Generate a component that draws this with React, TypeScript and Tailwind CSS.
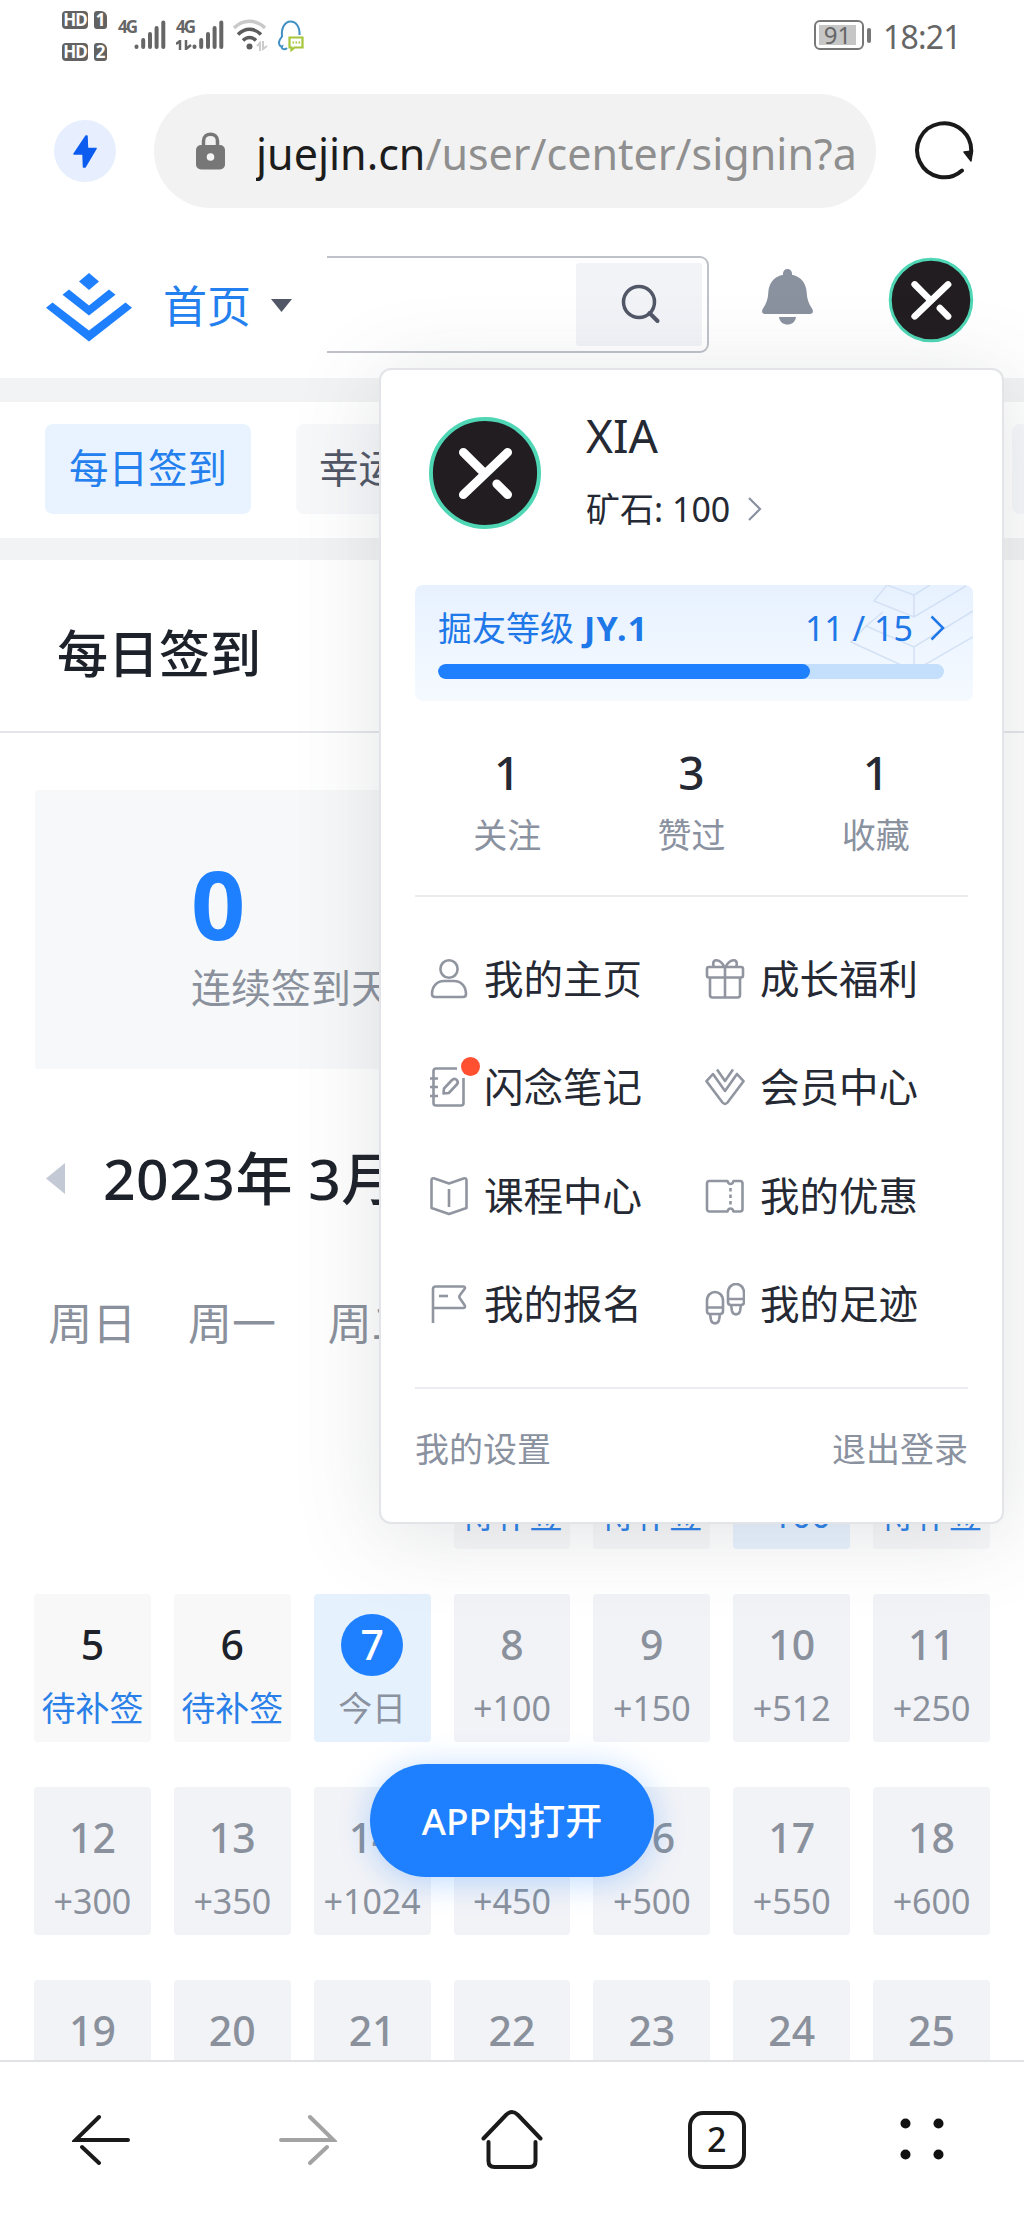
import type { ReactNode } from 'react';

type DayState = 'pending' | 'today' | 'signed' | 'future';

interface Day {
  day: number;
  label: string;
  state: DayState;
}

const WEEKDAYS = ['周日', '周一', '周二', '周三', '周四', '周五', '周六'];

const DAYS: Day[] = [
  { day: 1, label: '待补签', state: 'pending' },
  { day: 2, label: '待补签', state: 'pending' },
  { day: 3, label: '+100', state: 'signed' },
  { day: 4, label: '待补签', state: 'pending' },
  { day: 5, label: '待补签', state: 'pending' },
  { day: 6, label: '待补签', state: 'pending' },
  { day: 7, label: '今日', state: 'today' },
  { day: 8, label: '+100', state: 'future' },
  { day: 9, label: '+150', state: 'future' },
  { day: 10, label: '+512', state: 'future' },
  { day: 11, label: '+250', state: 'future' },
  { day: 12, label: '+300', state: 'future' },
  { day: 13, label: '+350', state: 'future' },
  { day: 14, label: '+1024', state: 'future' },
  { day: 15, label: '+450', state: 'future' },
  { day: 16, label: '+500', state: 'future' },
  { day: 17, label: '+550', state: 'future' },
  { day: 18, label: '+600', state: 'future' },
  { day: 19, label: '', state: 'future' },
  { day: 20, label: '', state: 'future' },
  { day: 21, label: '', state: 'future' },
  { day: 22, label: '', state: 'future' },
  { day: 23, label: '', state: 'future' },
  { day: 24, label: '', state: 'future' },
  { day: 25, label: '', state: 'future' },
];

const CELL_STYLES: Record<DayState, { box: string; num: string; label: string }> = {
  pending: { box: 'bg-[#f8f8f9]', num: 'text-[#1d2129]', label: 'text-[#2a80e8]' },
  signed: { box: 'bg-[#e8f3ff]', num: 'text-[#1e80ff]', label: 'text-[#2a80e8]' },
  today: { box: 'bg-[#e6f1fe]', num: 'rounded-full bg-[#1e80ff] text-white', label: 'text-[#8a919f]' },
  future: { box: 'bg-[#f2f3f7]', num: 'text-[#8a919c]', label: 'text-[#8a919c]' },
};

const STATS = [
  { value: 1, label: '关注' },
  { value: 3, label: '赞过' },
  { value: 1, label: '收藏' },
];

function MenuSvg({ children }: { children: ReactNode }) {
  return (
    <svg
      width="40"
      height="42"
      viewBox="0 0 40 42"
      fill="none"
      stroke="#9095a0"
      strokeWidth="2.6"
      strokeLinejoin="round"
      className="shrink-0"
    >
      {children}
    </svg>
  );
}

const MENU: { label: string; dot?: boolean; icon: ReactNode }[] = [
  {
    label: '我的主页',
    icon: (
      <MenuSvg>
        <ellipse cx="20" cy="11" rx="8.6" ry="8.8" />
        <path d="M3 36c0-7.500 5-13 12-13h10c7 0 12 5.500 12 13 0 2-1 3-3 3H6c-2 0-3-1-3-3z" />
      </MenuSvg>
    ),
  },
  {
    label: '成长福利',
    icon: (
      <MenuSvg>
        <rect x="2" y="9" width="36" height="10.500" rx="2" />
        <path d="M5 19.500V37c0 1.500 1 2.500 2.500 2.500h25c1.500 0 2.500-1 2.500-2.500V19.500M20 9v30.500M19.500 9C17 4 14 2 11 2.200 8 2.600 7.500 6 9 9M20.500 9C23 4 26 2 29 2.200c3 .4 3.500 3.800 2 6.800" />
      </MenuSvg>
    ),
  },
  {
    label: '闪念笔记',
    dot: true,
    icon: (
      <MenuSvg>
        <path d="M28 2.500H7C5.500 2.500 4.500 3.500 4.500 5v32c0 1.500 1 2.500 2.500 2.500h25c1.500 0 2.500-1 2.500-2.500V12M1 12.500h8M1 21h8M1 30h8" />
        <path d="M14.500 27.500l.5-5 8-8.500c1.500-1.500 3.500-1.500 4.800 0 1.200 1.400 1.200 3.200 0 4.500l-8 8.500z" />
      </MenuSvg>
    ),
  },
  {
    label: '会员中心',
    icon: (
      <MenuSvg>
        <path d="M8 8L1.500 15.200 17.500 36.500c1.500 1.800 3.500 1.800 5 0L38.500 15.200 32 8 20 25z" />
        <path d="M12 3.500l8 11.500 8-11.500" />
      </MenuSvg>
    ),
  },
  {
    label: '课程中心',
    icon: (
      <MenuSvg>
        <path d="M2.500 33V5.500C2.500 3.500 4 2.800 5.500 3.500L20 8.500l14.500-5c1.500-.7 3 0 3 2V33L20 39z" />
        <path d="M20 14v18" />
      </MenuSvg>
    ),
  },
  {
    label: '我的优惠',
    icon: (
      <MenuSvg>
        <path d="M4.500 6h18c1 4 5 4 6 0H35c1.500 0 2.500 1 2.500 2.500V34c0 1.500-1 2.500-2.500 2.500h-6.500c-1-4-5-4-6 0h-18C3 36.500 2 35.500 2 34V8.500C2 7 3 6 4.500 6z" />
        <path d="M25.500 13v18" strokeDasharray="3.500 3" />
      </MenuSvg>
    ),
  },
  {
    label: '我的报名',
    icon: (
      <MenuSvg>
        <path d="M4 40V6c0-1.500 1-2.500 2.500-2.500h28c1.500 0 2 1.500 1 2.500l-4.500 6c-1 1.200-1 2.200 0 3.500l4.500 6.500c1 1.500.5 3-1 3H4" />
        <path d="M10 13h9" />
      </MenuSvg>
    ),
  },
  {
    label: '我的足迹',
    icon: (
      <MenuSvg>
        <path d="M2 28V18c0-12 16-12 16 0v10c0 2-1 3-3 3H5c-2 0-3-1-3-3zM2 24.500h16M5 31l1 6c1 4.500 7 4.500 8 0l1-6" />
        <path d="M23 19V10c0-12 16-12 16 0v9c0 2-1 3-3 3H26c-2 0-3-1-3-3zM23 16h16M26 22l1 6c1 4.500 7 4.500 8 0l1-6" />
      </MenuSvg>
    ),
  },
];

function Avatar({ size }: { size: number }) {
  return (
    <svg width={size} height={size} viewBox="0 0 116 116" className="shrink-0">
      <circle cx="58" cy="58" r="55" fill="#221d20" stroke="#4fd6b4" strokeWidth="4" />
      <path d="M36 37l22 22M81 37L36 80M70 69l11 11" stroke="#fff" strokeWidth="9" strokeLinecap="round" fill="none" />
    </svg>
  );
}

function Signal() {
  return (
    <svg width="32" height="30" viewBox="0 0 32 30" stroke="#666" strokeWidth="4" strokeLinecap="round">
      <path d="M2.500 26.500v.5M9.200 20v7M16 14v13M22.600 8v19M29.300 2.500V27" />
    </svg>
  );
}

function HdBadge({ n }: { n: number }) {
  return (
    <div className="flex gap-[6px] text-[17px] leading-[18px] font-bold text-white">
      <span className="h-[18px] w-[26px] rounded-[4px] bg-[#626262] text-center tracking-[-1px]">HD</span>
      <span className="h-[18px] w-[13px] rounded-[3px] rounded-tr-[6px] bg-[#626262] text-center">{n}</span>
    </div>
  );
}

function StatusBar() {
  return (
    <div className="flex h-[94px] shrink-0 pl-[62px] text-[#666]">
      <div className="flex flex-col gap-[14px] pt-[11px]">
        <HdBadge n={1} />
        <HdBadge n={2} />
      </div>
      <span className="mt-[18px] ml-[11px] w-[16px] text-[17px] leading-[18px] font-bold tracking-[-2px]">4G</span>
      <div className="mt-[20px]">
        <Signal />
      </div>
      <div className="mt-[18px] ml-[10px] w-[17px]">
        <div className="text-[17px] leading-[18px] font-bold tracking-[-2px]">4G</div>
        <svg width="16" height="10" viewBox="0 0 16 10" stroke="#666" strokeWidth="2.500" fill="none" className="mt-[4px]">
          <path d="M0 4l4-3v9M10 0v9l5-4" />
        </svg>
      </div>
      <div className="mt-[20px] -ml-[1px]">
        <Signal />
      </div>
      <svg width="36" height="32" viewBox="0 0 36 32" fill="none" strokeWidth="3.500" className="mt-[19px] ml-[9px]">
        <path d="M1 9C10 0 23 0 32 9" stroke="#c9c9c9" />
        <path d="M5 15.500c7-7 16-7 23 0" stroke="#5c5c5c" />
        <path d="M10 21.500c4-4 9-4 13 0" stroke="#5c5c5c" />
        <circle cx="16.500" cy="27.500" r="3" fill="#5c5c5c" />
        <path d="M24 27l3-3v8M30 22v8l4-3" stroke="#ccc" strokeWidth="2" />
      </svg>
      <svg width="28" height="32" viewBox="0 0 28 32" fill="none" className="mt-[20px] ml-[8px]">
        <path
          d="M10 28c-2 2-6 1.500-5-1.500-1 .5-3-1-3-4 0-2 1.500-4 3-6C4 8 8 1.500 13.500 1.500S23 7 22.500 15"
          stroke="#3f8fc4"
          strokeWidth="2"
        />
        <path d="M12.500 17.500h13v10h-8l-3 2.500v-2.500h-2z" stroke="#a5c63a" strokeWidth="2.200" />
        <path d="M15.500 22.500h8" stroke="#a5c63a" strokeWidth="1.800" strokeDasharray="1.600 1.400" />
      </svg>
      <div className="mt-[20px] ml-auto flex h-[30px] w-[50px] rounded-[6px] border-[2.500px] border-[#777] p-[3px]">
        <span className="w-[37px] bg-[#c6c6c6] text-center text-[24px] leading-[19px]">91</span>
      </div>
      <span className="mt-[28px] ml-[3px] h-[15px] w-[4px] rounded-sm bg-[#777]" />
      <span className="mt-[17px] mr-[64px] ml-[12px] w-[77px] text-[32px] leading-[40px] tracking-[-0.800px]">18:21</span>
    </div>
  );
}

function AddressBar() {
  return (
    <div className="flex h-[114px] shrink-0 items-center pl-[54px]">
      <div className="flex h-[62px] w-[62px] items-center justify-center rounded-full bg-[#e7effe]">
        <svg width="24" height="33" viewBox="0 0 24 33" fill="#0d5cf0" stroke="#0d5cf0" strokeWidth="1.500" strokeLinejoin="round">
          <path d="M13 1L1 19h9l.5 13h1.500L23 13.500h-8.500L14 1z" />
        </svg>
      </div>
      <div className="ml-[38px] flex h-[114px] w-[722px] items-center rounded-full bg-[#f2f2f2] pl-[42px]">
        <svg width="29" height="38" viewBox="0 0 29 38" className="shrink-0">
          <path d="M7.500 15V9c0-9 14-9 14 0v6" fill="none" stroke="#777" strokeWidth="3.500" />
          <rect y="13" width="29" height="24.500" rx="5" fill="#777" />
          <circle cx="14.500" cy="25" r="3.800" fill="#f5f5f5" />
        </svg>
        <div className="mt-[5px] ml-[31px] w-[600px] overflow-hidden text-[43px] leading-[60px] whitespace-nowrap text-[#8f8f8f]">
          <span className="text-[#1c1c1c]">juejin.cn</span>/user/center/signin?a
        </div>
      </div>
      <svg width="62" height="62" viewBox="0 0 62 62" fill="none" className="ml-[37px]">
        <path d="M49 50.500A27 27 0 1 1 58 33" stroke="#1a1a1a" strokeWidth="4" strokeLinecap="round" />
        <path d="M51 32l7 9 1.500-10z" fill="#1a1a1a" stroke="#1a1a1a" strokeWidth="1.500" strokeLinejoin="round" />
      </svg>
    </div>
  );
}

function SiteHeader() {
  return (
    <header className="flex h-[170px] shrink-0 items-center pt-[22px] pl-[46px]">
      <svg width="86" height="69" viewBox="0 0 86 69" fill="#1e80ff" className="mt-[6px]">
        <path d="M43 0l10 8.500L43 17 33 8.500zM23 16.500l20 16 20-16 6.500 5.200L43 42.500 16.500 21.700zM6.500 29.500L43 57.500l36.500-28 6.500 5.200L43 68.500 0 34.700z" />
      </svg>
      <span className="mt-[4px] ml-[31px] text-[44px] leading-[60px] text-[#2480ee]">首页</span>
      <svg width="21" height="13" viewBox="0 0 21 13" className="mt-[2px] ml-[20px]">
        <path d="M0 0h21L10.500 13z" fill="#515767" />
      </svg>
      <div className="ml-[35px] flex h-[97px] w-[382px] justify-end rounded-r-[9px] border-[2.500px] border-l-0 border-[#bfc2c8] bg-white/50 p-[5px]">
        <div className="flex w-[126px] items-center justify-center rounded-[3px] bg-[#f2f3f7] pl-[4px]">
          <svg width="40" height="40" viewBox="0 0 40 40" fill="none" stroke="#515767" strokeWidth="3.500" className="-mt-[1px]">
            <circle cx="18" cy="18" r="15.500" />
            <path d="M28.500 29l8 8" strokeWidth="4" strokeLinecap="round" />
          </svg>
        </div>
      </div>
      <svg width="51" height="56" viewBox="0 0 51 56" fill="#8a919f" className="-mt-[14px] ml-[53px]">
        <path d="M25.500 0c-2.500 0-4.500 2-4.500 4.500v1.300C11 8 6.800 15 6.300 23.500 6 30 4.500 34.500 1 39.500c-2 3-.5 5.500 2 5.500h45c2.500 0 4-2.500 2-5.500-3.500-5-5-9.500-5.300-16C44.200 15 40 8 30 5.800V4.500C30 2 28 0 25.500 0zM17 48h17c-1 10-16 10-17 0z" />
      </svg>
      <div className="-mt-[8px] ml-[75px]">
        <Avatar size={86} />
      </div>
    </header>
  );
}

function DayCell({ day, label, state }: Day) {
  const s = CELL_STYLES[state];
  return (
    <div className={`flex h-[148px] flex-col items-center rounded-[4px] pt-[20px] ${s.box}`}>
      <span className={`h-[62px] w-[62px] text-center text-[41px] leading-[60px] font-medium ${s.num}`}>{day}</span>
      {label && <span className={`mt-[9px] text-[34px] leading-[46px] whitespace-nowrap ${s.label}`}>{label}</span>}
    </div>
  );
}

function SignIn() {
  return (
    <section>
      <div className="h-[173px] border-b-2 border-[#e4e5e8] pt-[59px] pl-[57px]">
        <h1 className="text-[51px] leading-[68px] font-medium text-[#1d2129]">每日签到</h1>
      </div>
      <div className="mx-[35px] mt-[57px] h-[279px] rounded-[3px] bg-[#f7f8f9] pt-[66px] pl-[156px]">
        <div className="text-[95px] leading-[94px] font-bold text-[#1e80ff]">0</div>
        <div className="mt-[15px] text-[40px] leading-[46px] text-[#8a919c]">连续签到天数</div>
      </div>
      <div className="mt-[69px] flex h-[80px] items-center pl-[46px]">
        <svg width="19" height="31" viewBox="0 0 19 31">
          <path d="M19 0v31L0 15.500z" fill="#c4c9d6" />
        </svg>
        <h2 className="ml-[38px] text-[57px] leading-[80px] font-medium tracking-[0.500px] text-[#1d2129]">2023年 3月</h2>
      </div>
      <div className="mt-[75px] ml-[34px] grid w-[955px] grid-cols-7 gap-x-[23px] text-center text-[44px] leading-[60px] text-[#8a919c]">
        {WEEKDAYS.map((w) => (
          <span key={w} className="whitespace-nowrap">
            {w}
          </span>
        ))}
      </div>
      <div className="mt-[48px] ml-[34px] grid w-[956px] grid-cols-7 gap-x-[23px] gap-y-[45px]">
        <div className="col-span-3" />
        {DAYS.map((d) => (
          <DayCell key={d.day} {...d} />
        ))}
      </div>
    </section>
  );
}

function UserPopover() {
  return (
    <div className="absolute top-[368px] left-[379px] h-[1156px] w-[625px] rounded-[12px] border-[2.500px] border-[#e3e4e8] bg-white px-[34px] shadow-[0_10px_84px_rgba(81,87,103,0.17)]">
      <div className="flex pt-[46px] pl-[13px]">
        <Avatar size={114} />
        <div className="ml-[44px]">
          <div className="mt-[-9px] text-[46px] leading-[56px] text-[#252933]">XIA</div>
          <div className="mt-[26px] flex items-center text-[34px] leading-[40px] text-[#252933]">
            矿石: 100
            <svg width="14" height="24" viewBox="0 0 14 24" fill="none" stroke="#8a919f" strokeWidth="2.200" className="ml-[18px]">
              <path d="M1 1l11 11L1 23" />
            </svg>
          </div>
        </div>
      </div>

      <div className="relative mt-[55px] h-[116px] w-[558px] overflow-hidden rounded-[8px] bg-gradient-to-b from-[#e7f1ff] to-[#f5faff] px-[23px]">
        <svg width="558" height="116" viewBox="0 0 558 116" fill="none" stroke="#d3e1f5" strokeWidth="1.500" className="absolute inset-0">
          <path d="M472 0L459 16l40 16 52-31M472 0l27 10v22M499 10l16-10M468 27l-17 14 48 21 59-36M451 41l-15 16 63 29 59-34M499 62v24" />
        </svg>
        <div className="relative flex items-center pt-[20px] text-[34px] leading-[46px] text-[#1e78e8]">
          <span>掘友等级</span>
          <span className="ml-[10px] font-bold tracking-[1.200px]">JY.1</span>
          <span className="ml-auto">11 / 15</span>
          <svg width="15" height="26" viewBox="0 0 15 26" fill="none" stroke="#1e78e8" strokeWidth="2.500" className="mr-[5px] ml-[17px]">
            <path d="M1.500 1.500L13 13 1.500 24.500" />
          </svg>
        </div>
        <div className="relative mt-[13px] h-[15px] w-[506px] overflow-hidden rounded-full bg-[#c3dffc]">
          <div className="h-full w-[372px] rounded-full bg-[#1e80ff]" />
        </div>
      </div>

      <div className="mt-[42px] grid w-[553px] grid-cols-3 text-center">
        {STATS.map(({ value, label }) => (
          <div key={label}>
            <div className="text-[46px] leading-[58px] font-medium text-[#252933]">{value}</div>
            <div className="mt-[11px] text-[34px] leading-[46px] text-[#8a919f]">{label}</div>
          </div>
        ))}
      </div>

      <div className="mt-[37px] h-[2px] w-[553px] bg-[#ebecef]" />

      <div className="mt-[28px] grid grid-cols-[276px_275px] pl-[14px]">
        {MENU.map(({ label, icon, dot }) => (
          <div key={label} className="relative flex h-[108.300px] items-center text-[39.500px] leading-[60px] text-[#252933]">
            {icon}
            <span className="ml-[15px] whitespace-nowrap">{label}</span>
            {dot && <span className="absolute top-[24px] left-[32px] h-[19px] w-[19px] rounded-full bg-[#ff5132]" />}
          </div>
        ))}
      </div>

      <div className="mt-[29px] h-[2px] w-[553px] bg-[#ebecef]" />
      <div className="mt-[37px] flex w-[553px] justify-between text-[34px] leading-[46px] text-[#8a919f]">
        <span>我的设置</span>
        <span>退出登录</span>
      </div>
    </div>
  );
}

function BrowserNav() {
  return (
    <nav className="relative grid h-[158px] shrink-0 grid-cols-5 place-items-center border-t-2 border-[#e2e2e6] bg-white">
      <svg width="60" height="54" viewBox="0 0 60 54" fill="none" stroke="#1a1a1a" strokeWidth="4" strokeLinecap="round">
        <path d="M56 27H3.500L27 4M10 34l17 16" />
      </svg>
      <svg width="60" height="54" viewBox="0 0 60 54" fill="none" stroke="#a3a3a3" strokeWidth="4" strokeLinecap="round">
        <path d="M4 27h52.500L33 4M50 34L33 50" />
      </svg>
      <svg width="62" height="60" viewBox="0 0 62 60" fill="none" stroke="#1a1a1a" strokeWidth="4" strokeLinecap="round">
        <path d="M2.500 28.500L25 5c4-4 8-4 12 0l22.500 23.500M7.500 32v19c0 4 2 6 6 6h35c4 0 6-2 6-6V32" />
      </svg>
      <span className="h-[58px] w-[58px] rounded-[15px] border-4 border-[#1a1a1a] text-center text-[34px] leading-[49px] font-medium text-[#1a1a1a]">
        2
      </span>
      <svg width="44" height="44" viewBox="0 0 44 44" fill="#111">
        <circle cx="5.500" cy="5.500" r="5" />
        <circle cx="38.500" cy="5.500" r="5" />
        <circle cx="5.500" cy="36.500" r="5" />
        <circle cx="38.500" cy="36.500" r="5" />
      </svg>
    </nav>
  );
}

export default function App() {
  return (
    <div className="relative flex h-[2218px] w-[1024px] flex-col overflow-hidden bg-white font-['Noto_Sans','Noto_Sans_CJK_SC',sans-serif]">
      <StatusBar />
      <AddressBar />
      <SiteHeader />

      <main className="min-h-0 flex-1 overflow-hidden">
        <div className="h-[24px] bg-[#f2f3f4]" />
        <div className="flex h-[136px] items-start gap-[45px] overflow-hidden pt-[22px] pl-[45px] text-[39.500px] leading-[88px] whitespace-nowrap">
          <span className="h-[90px] w-[206px] shrink-0 rounded-[8px] bg-[#e8f3ff] text-center text-[#2480ee]">每日签到</span>
          <span className="h-[90px] w-[671px] shrink-0 rounded-[8px] bg-[#f7f8fa] pl-[23px] text-[#515767]">幸运抽奖</span>
          <span className="h-[90px] w-[206px] shrink-0 rounded-[8px] bg-[#f7f8fa]" />
        </div>
        <div className="h-[22px] bg-[#f2f3f4]" />
        <SignIn />
      </main>

      <BrowserNav />

      <UserPopover />
      <button className="absolute top-[1764px] left-[370px] h-[113px] w-[284px] rounded-full bg-[#1e80ff] text-[37px] leading-[110px] font-medium text-white shadow-[0_4px_32px_rgba(30,128,255,0.3)]">
        APP内打开
      </button>
    </div>
  );
}
